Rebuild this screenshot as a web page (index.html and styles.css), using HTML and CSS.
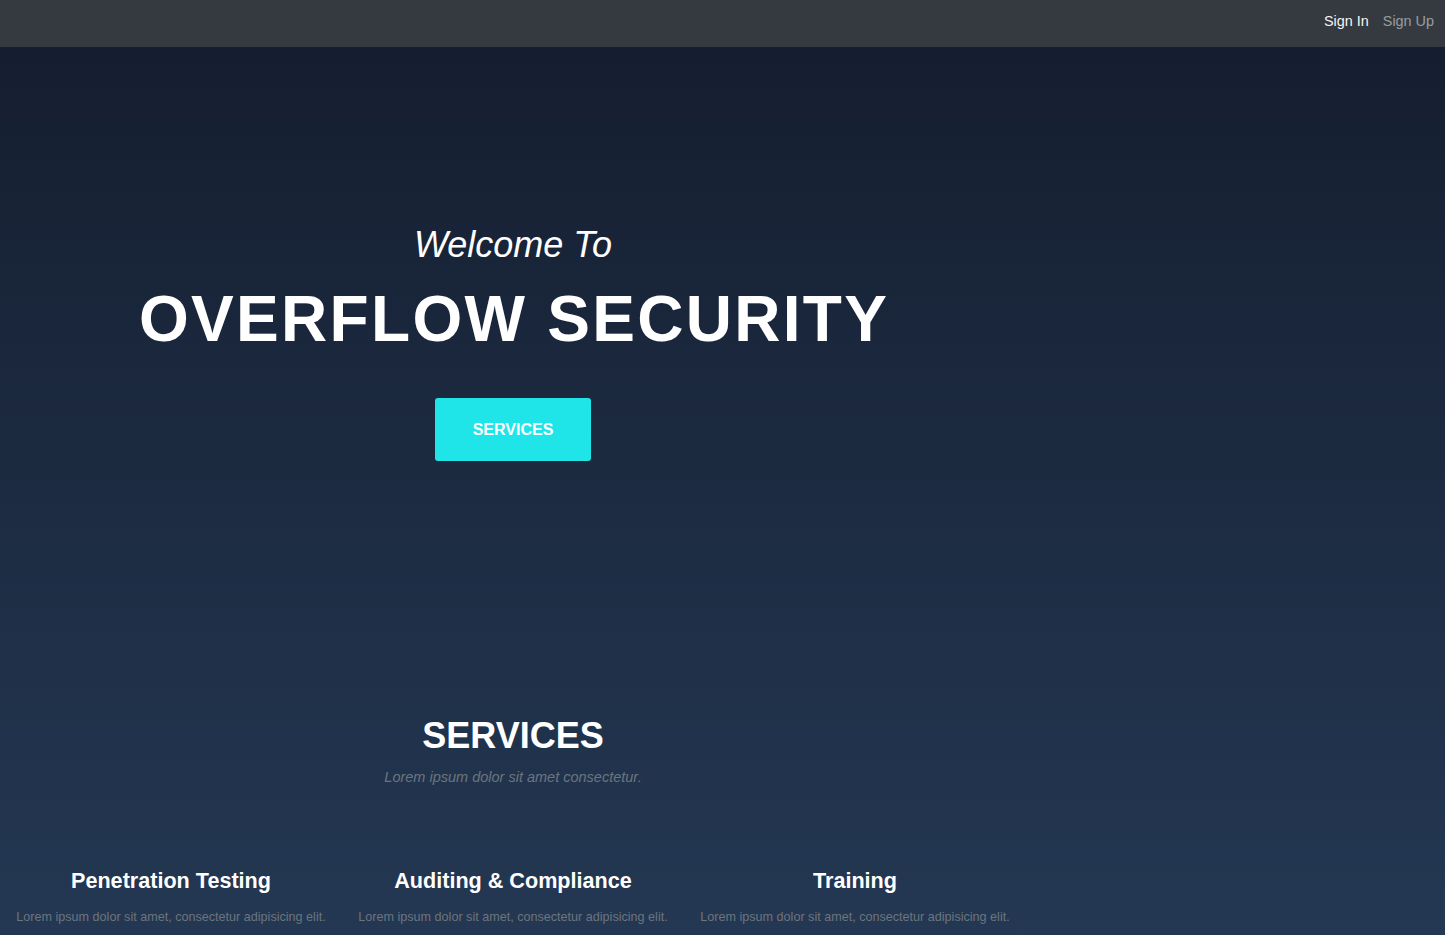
FILE: index.html
```html
<!DOCTYPE html>
<html lang="en">
<head>
<meta charset="utf-8">
<title>Overflow Security</title>
<link rel="stylesheet" href="styles.css">
</head>
<body>
<nav class="navbar">
  <a class="nav-link active" href="#">Sign In</a>
  <a class="nav-link" href="#">Sign Up</a>
</nav>
<main class="page">
  <section class="hero">
    <div class="welcome">Welcome To</div>
    <h1 class="title">OVERFLOW SECURITY</h1>
    <a class="btn" href="#services">SERVICES</a>
  </section>
  <section class="services" id="services">
    <h2 class="section-heading">SERVICES</h2>
    <p class="section-sub">Lorem ipsum dolor sit amet consectetur.</p>
    <div class="cols">
      <div class="col">
        <h4 class="col-title">Penetration Testing</h4>
        <p class="col-text">Lorem ipsum dolor sit amet, consectetur adipisicing elit.</p>
      </div>
      <div class="col">
        <h4 class="col-title">Auditing &amp; Compliance</h4>
        <p class="col-text">Lorem ipsum dolor sit amet, consectetur adipisicing elit.</p>
      </div>
      <div class="col">
        <h4 class="col-title">Training</h4>
        <p class="col-text">Lorem ipsum dolor sit amet, consectetur adipisicing elit.</p>
      </div>
    </div>
  </section>
</main>
</body>
</html>
```

FILE: styles.css
```css
* { box-sizing: border-box; }
html, body { margin: 0; padding: 0; }
body {
  font-family: "Liberation Sans", Arial, sans-serif;
  min-height: 935px;
  background: linear-gradient(to bottom, #151e30 0px, #151e30 47px, #243853 935px);
  color: #fff;
  overflow: hidden;
}
.navbar {
  height: 47px;
  background: #343a40;
  display: flex;
  align-items: center;
  justify-content: flex-end;
  padding: 0 11px 5px 0;
  gap: 14px;
}
.nav-link {
  font-size: 14.4px;
  color: rgba(255,255,255,0.5);
  text-decoration: none;
}
.nav-link.active { color: #f4f4f4; }
.page {
  width: 1026px;
}
.hero {
  padding-top: 176px;
  display: flex;
  flex-direction: column;
  align-items: center;
  text-align: center;
}
.welcome {
  font-style: italic;
  font-size: 36px;
  line-height: 43px;
}
.title {
  margin: 14.5px 0 0;
  font-size: 64px;
  line-height: 77px;
  font-weight: 700;
  letter-spacing: 2.3px;
  margin-right: -2.3px;
}
.btn {
  margin-top: 40.5px;
  display: block;
  background: #1fe5e8;
  color: #fff;
  font-weight: 700;
  font-size: 16px;
  line-height: 19px;
  padding: 22px 37.5px;
  border-radius: 3px;
  text-decoration: none;
}
.services {
  margin-top: 252.5px;
  text-align: center;
}
.section-heading {
  margin: 0;
  font-size: 36px;
  line-height: 43px;
  font-weight: 700;
}
.section-sub {
  margin: 12px 0 0;
  font-size: 14.5px;
  line-height: 17px;
  font-style: italic;
  color: #6c757d;
}
.cols {
  margin-top: 82px;
  display: grid;
  grid-template-columns: repeat(3, 1fr);
}
.col-title {
  margin: 0;
  font-size: 21.6px;
  line-height: 26px;
  font-weight: 700;
}
.col-text {
  margin: 16.5px 0 0;
  font-size: 12.6px;
  line-height: 15px;
  color: #6c757d;
}
```
